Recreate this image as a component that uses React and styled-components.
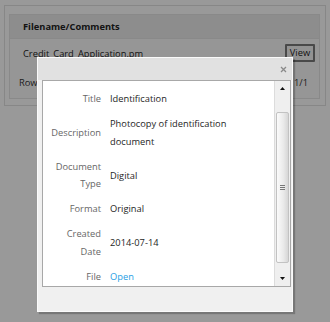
import React from "react";
import styled, { createGlobalStyle } from "styled-components";

const GlobalStyle = createGlobalStyle`
  html, body {
    margin: 0;
    padding: 0;
    background: #fff;
    font-family: "Open Sans", "Liberation Sans", sans-serif;
    font-size: 9.3px;
    color: #333;
  }
`;

const Screen = styled.div`
  position: relative;
  width: 330px;
  height: 322px;
  overflow: hidden;
`;

/* page behind the dialog */

const Panel = styled.div`
  margin: 5px 4px 0 4px;
  border: 1px solid #e2e2e2;
  padding: 8px 5px 6px 4px;
`;

const FileTable = styled.div`
  border: 1px solid #e4e4e4;
  background: #fbfbfb;
`;

const TableHeader = styled.div`
  height: 23px;
  display: flex;
  align-items: center;
  padding-left: 13px;
  background: #ececec;
  border-bottom: 1px solid #e4e4e4;
  font-weight: 700;
  color: #222;
`;

const FileRow = styled.div`
  height: 28px;
  display: flex;
  align-items: center;
  justify-content: space-between;
  padding: 0 4px 0 13px;
  color: #222;
`;

const ViewButton = styled.button`
  font: inherit;
  color: #222;
  background: #f4f4f4;
  border: 2px solid #7a7a7a;
  border-radius: 1px;
  height: 18px;
  width: 30px;
  padding: 0;
  margin-top: -1px;
`;

const Pager = styled.div`
  height: 31px;
  display: flex;
  align-items: center;
  justify-content: space-between;
  padding: 0 11px 0 9px;
  color: #333;
`;

const Overlay = styled.div`
  position: absolute;
  inset: 0;
  background: rgba(0, 0, 0, 0.4);
`;

/* dialog */

const Dialog = styled.div`
  position: absolute;
  left: 37px;
  top: 57px;
  width: 256px;
  height: 255px;
  box-sizing: border-box;
  border: 1px solid #fafafa;
  background: #f0f0f0;
  box-shadow: 2px 2px 1px rgba(0, 0, 0, 0.22);
  display: flex;
  flex-direction: column;
`;

const DialogHeader = styled.div`
  height: 22px;
  flex: none;
  display: flex;
  align-items: center;
  justify-content: flex-end;
  padding-right: 5px;
  background: #e1e1e1;
`;

const CloseButton = styled.span`
  display: flex;
  width: 7px;
  height: 7px;
  cursor: pointer;
`;

const DialogBody = styled.div`
  padding: 0 1px 0 4px;
`;

const ContentBox = styled.div`
  height: 207px;
  box-sizing: border-box;
  border: 1px solid #a8a8a8;
  background: #fff;
  display: flex;
  overflow: hidden;
`;

const DetailGrid = styled.div`
  flex: 1;
  display: grid;
  grid-template-columns: 54px 1fr;
  column-gap: 9px;
  align-content: start;
  align-items: center;
  padding: 5.5px 12px 0 4px;
  line-height: 17.5px;
`;

const Label = styled.div`
  padding: 3.75px 0;
  text-align: right;
  color: #666;
`;

const Value = styled.div`
  padding: 3.75px 0;
  color: #1e1e1e;
`;

const FileLink = styled.a`
  color: #2aa0e4;
  text-decoration: none;
`;

const Scrollbar = styled.div`
  width: 15px;
  flex: none;
  display: flex;
  flex-direction: column;
  background: #efefef;
  border-left: 1px solid #dcdcdc;
`;

const ArrowButton = styled.div`
  height: 15px;
  flex: none;
  display: flex;
  align-items: center;
  justify-content: center;
`;

const Track = styled.div`
  flex: 1;
  padding: 16px 1px 8px 1px;
  display: flex;
`;

const Thumb = styled.div`
  flex: 1;
  border: 1px solid #c2c2c2;
  border-radius: 2px;
  background: linear-gradient(to right, #fbfbfb, #e9e9e9 60%, #d6d6d6);
  display: flex;
  align-items: center;
  justify-content: center;
`;

const DialogFooter = styled.div`
  flex: 1;
`;

const Triangle = ({ down }) => (
  <svg width="5" height="3" viewBox="0 0 5 3">
    <path d={down ? "M0 0 H5 L2.5 3 Z" : "M0 3 H5 L2.5 0 Z"} fill="#111" />
  </svg>
);

const Grip = () => (
  <svg width="5" height="5" viewBox="0 0 5 5">
    <path d="M0 0.5 H5 M0 2.5 H5 M0 4.5 H5" stroke="#777" strokeWidth="1" />
  </svg>
);

const CloseIcon = () => (
  <svg width="7" height="7" viewBox="0 0 7 7">
    <path d="M1 1 L6 6 M6 1 L1 6" stroke="#8a8a8a" strokeWidth="1.3" />
  </svg>
);

const details = [
  { label: "Title", value: "Identification" },
  { label: "Description", value: "Photocopy of identification document" },
  { label: "Document Type", value: "Digital" },
  { label: "Format", value: "Original" },
  { label: "Created Date", value: "2014-07-14" },
  { label: "File", link: "Open" },
];

const App = () => {
  return (
    <Screen>
      <GlobalStyle />
      <Panel>
        <FileTable>
          <TableHeader>Filename/Comments</TableHeader>
          <FileRow>
            <span>Credit_Card_Application.pm</span>
            <ViewButton>View</ViewButton>
          </FileRow>
          <Pager>
            <span>Rows 1 - 1 of 1</span>
            <span>Page 1/1</span>
          </Pager>
        </FileTable>
      </Panel>
      <Overlay />
      <Dialog>
        <DialogHeader>
          <CloseButton>
            <CloseIcon />
          </CloseButton>
        </DialogHeader>
        <DialogBody>
          <ContentBox>
            <DetailGrid>
              {details.map(d => (
                <React.Fragment key={d.label}>
                  <Label>{d.label}</Label>
                  <Value>
                    {d.link ? <FileLink href="#">{d.link}</FileLink> : d.value}
                  </Value>
                </React.Fragment>
              ))}
            </DetailGrid>
            <Scrollbar>
              <ArrowButton>
                <Triangle />
              </ArrowButton>
              <Track>
                <Thumb>
                  <Grip />
                </Thumb>
              </Track>
              <ArrowButton>
                <Triangle down />
              </ArrowButton>
            </Scrollbar>
          </ContentBox>
        </DialogBody>
        <DialogFooter />
      </Dialog>
    </Screen>
  );
};

export default App;
